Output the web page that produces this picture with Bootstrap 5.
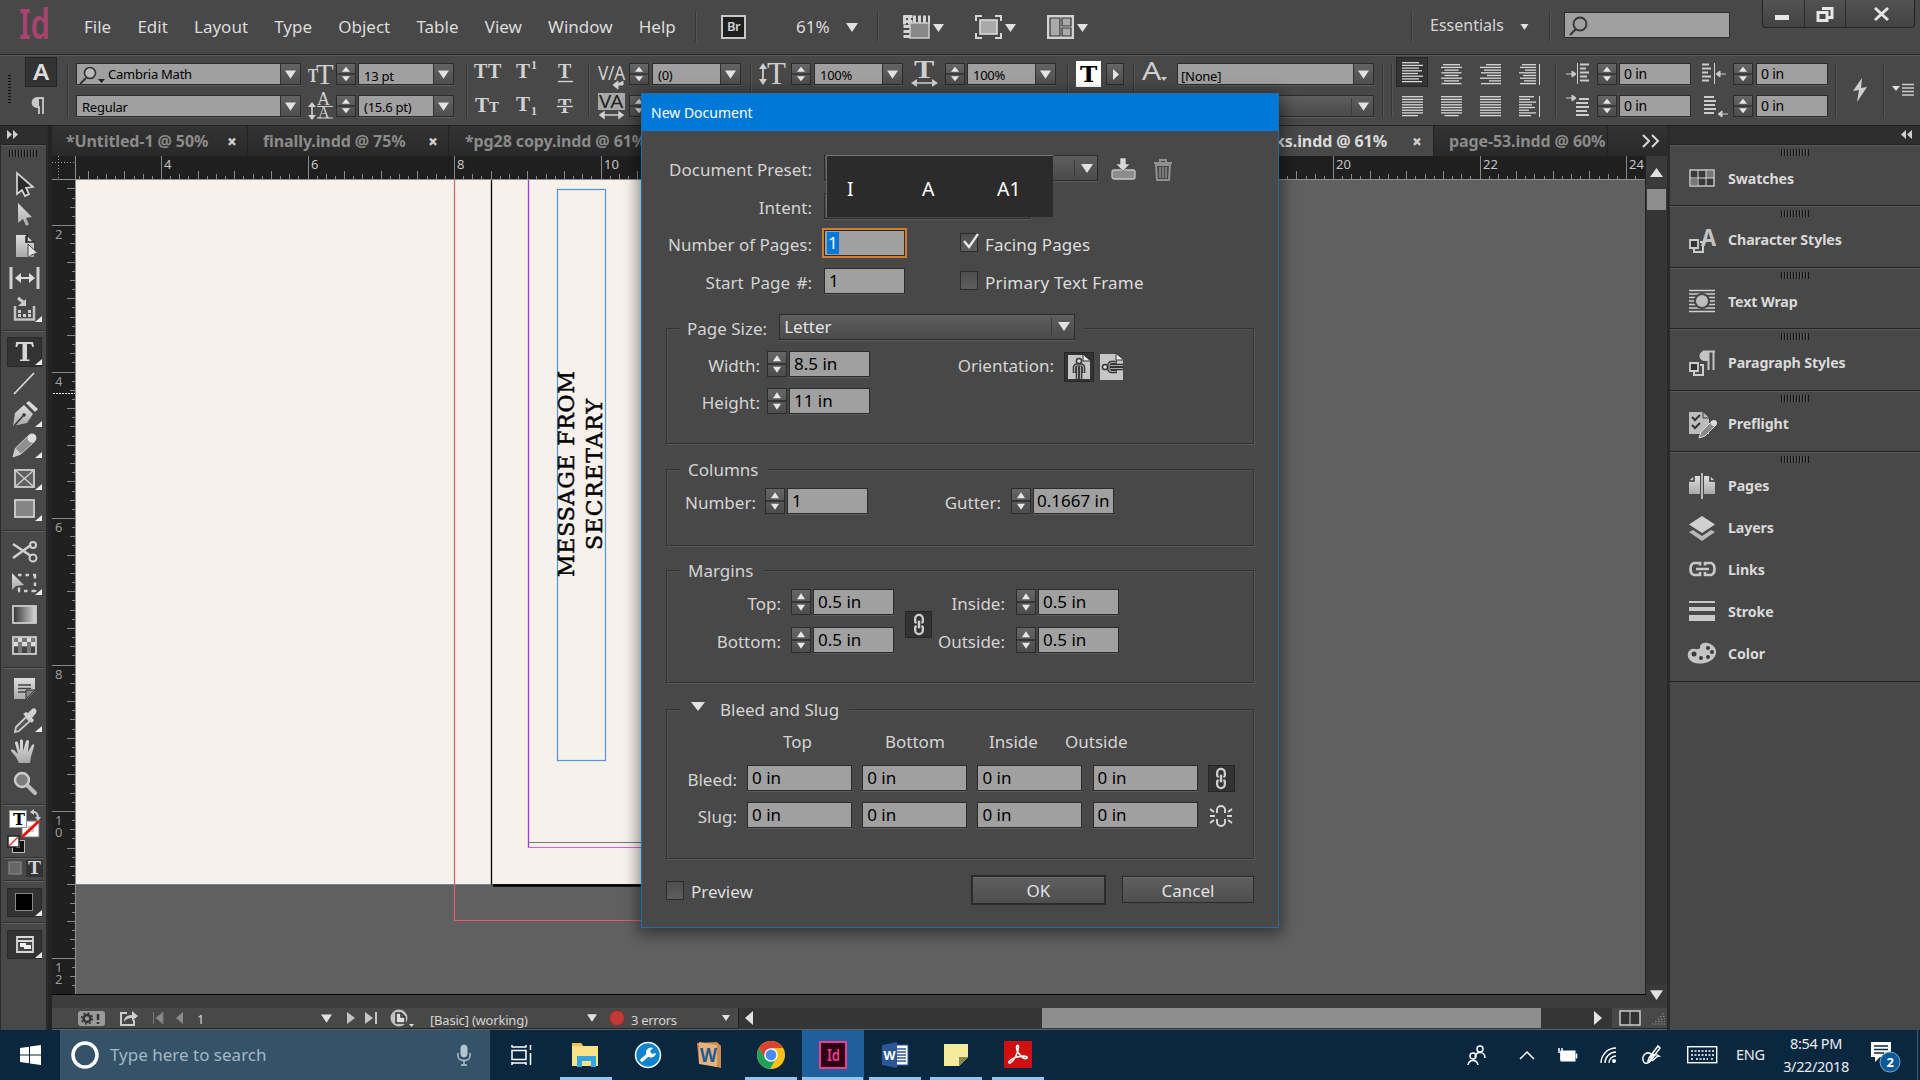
<!DOCTYPE html>
<html lang="en">
<head>
<meta charset="utf-8">
<title>New Document</title>
<link href="https://cdn.jsdelivr.net/npm/bootstrap@5.3.0/dist/css/bootstrap.min.css" rel="stylesheet">
<script src="https://cdn.jsdelivr.net/npm/bootstrap@5.3.0/dist/js/bootstrap.bundle.min.js"></script>
<style>
:root{--bg:#484848;--line:#2b2b2b;--fld:#a0a0a0;--ink:#d4d4d4}
body{width:1920px;height:1080px;overflow:hidden;background:var(--bg);color:var(--ink);font-family:"Noto Sans","Open Sans",sans-serif;font-size:17px;line-height:1.2;white-space:nowrap}
svg{display:block;flex:none;overflow:visible}
.shell{width:1920px;height:1080px}
/* menu bar */
.menus{height:54px;position:relative}
.menus .m-list{margin-left:33px;gap:26.2px;padding-top:1px;width:592px;font-size:17px;color:#dcdcdc}
.vsep{width:2px;background:#363636;border-right:1px solid #565656;flex:none}
.menus .vsep{height:30px}
.br-box{width:25px;height:24px;border:2px solid #c9c9c9;background:#1f1f1f;color:#d0d0d0;font-size:13px;line-height:19px;text-align:center;font-weight:600;letter-spacing:-.5px}
.find-box{width:166px;height:26px;background:var(--fld);border:1px solid var(--line)}
.win-ctl{position:absolute;right:5px;top:0;width:153px;height:28px;border:1px solid #232323;border-top:0;border-radius:0 0 4px 4px;background:linear-gradient(#525252,#434343)}
.win-ctl>span{border-right:1px solid #2b2b2b;height:27px}
.win-ctl>span:last-child{border:0}
/* control strip */
.ctl{height:72px;border-top:1px solid #262626;box-shadow:inset 0 1px #5a5a5a;border-bottom:1px solid #222;padding-top:8px;display:grid;grid-template-rows:22px 22px;row-gap:10px;grid-auto-flow:column;justify-items:start;align-items:center;align-content:start;font-size:13px;letter-spacing:-.25px;
grid-template-columns:25px 42px 9px 232px 28px 22px 108px 8px 42px 41px 31px 10px 31px 23px 98px 9px 32px 23px 97px 34px 22px 100px 9px 30px 27px 9px 35px 205px 9px 5px 41px 39px 39px 40px 11px 31px 22px 83px 31px 23px 79px 13px 35px 9px 28px}
.ctl .both{grid-row:span 2}
.ctl .vsep{height:54px;grid-row:span 2}
.box-in{background:var(--fld);border:1px solid var(--line);box-shadow:0 1px #5c5c5c;color:#000;display:flex;height:22px;line-height:22px;overflow:hidden;padding-left:5px;flex:none}
.box-in .drop{margin-left:auto;width:20px;background:linear-gradient(#636363,#4e4e4e);border-left:1px solid #333;display:flex;align-items:center;justify-content:center;flex:none}
.dim{background:linear-gradient(#5e5e5e,#4a4a4a);color:#e4e4e4}
.dim .drop{border:0;position:relative;background:none}
.dim .drop::before{content:"";width:1px;height:17px;background:#3a3a3a;margin-right:6px;margin-left:-7px}
.w225{width:225px}.w95{width:96px}.w88{width:89px}.w196{width:197px}.w72{width:72px}
.stp{width:20px;height:22px;border:1px solid var(--line);background:linear-gradient(#666,#4c4c4c);flex:none}
.stp svg{width:100%;height:100%}
.pressed{background:#333;border:1px solid #262626}
.ibtn{width:32px;height:30px;margin-top:-4px;display:flex;align-items:center;justify-content:center}
/* work area */
.work{height:904px}
.tools{width:48px;background:var(--bg);border-left:1px solid #2b2b2b;border-right:2px solid #2a2a2a;flex:none}
.dark-head{height:19px;background:#2e2e2e;border-bottom:1px solid #222}
.tools .grip-row{height:23px;padding:4px 0 0 8px;border-top:1px solid #5b5b5b}
.grip{width:28px;height:7px;background:repeating-linear-gradient(90deg,#141414 0 1px,#5a5a5a 1px 2px,#484848 2px 3px)}
.tool{height:31.45px;padding-top:.5px}
.tool svg{width:45px;height:30px}
.tool-sep{height:11.4px;padding:5px 2px 0 3px}
.tool-sep::before{content:"";display:block;height:2px;border-top:1px solid #303030;border-bottom:1px solid #626262}
.center{width:1619px;flex:none;border-left:4px solid #242424;position:relative;background:#606060}
.tabs{height:30px;background:linear-gradient(#333,#292929);font-size:16px;font-weight:700;color:#8b8b8b;letter-spacing:-.1px}
.tab{height:30px;border-right:1px solid #222;line-height:31px;display:flex}
.tab b{margin-left:auto;color:#cfcfcf;font-size:17px;width:9px}
.t1{width:196px;padding:0 11px 0 14px}.t2{width:201px;padding:0 11px 0 15px}.t3{width:202px;padding-left:16px;overflow:hidden}
.t4{width:783px;padding:0 12px 0 624px;background:var(--bg);color:#dcdcdc}.t5{width:174px;padding-left:15px;overflow:hidden}
.stage{height:838px}
.vbar{width:23px;background:#353535;border-left:1px solid #222}
.vbar .thumb{height:21px;background:#8e8e8e;margin:1px 1px 0}
.vbar .ar{height:32px;display:flex;justify-content:center;align-items:center;background:#3a3a3a}
.foot{height:21px;background:var(--bg);font-size:13px;letter-spacing:-.3px;border-bottom:1px solid #252525}
.foot>*{flex:none}
.pad-strip{height:14px;background:#3c3c3c;border-top:1px solid #000}
.side{flex:1;background:var(--bg);border-left:3px solid #2a2a2a}
.pane{border-top:1px solid #5b5b5b;border-bottom:1px solid #222;height:61.4px;padding-top:2px}
.pane .grip{margin:1px 0 0 111px}
.pane.tall{height:230px}
.entry{height:41.8px;display:flex;align-items:center;padding-left:18px;font-weight:700;font-size:14.2px;color:#dadada;letter-spacing:-.1px}
.entry svg{width:28px;height:26px;margin-right:12px}
.pane .entry{margin-top:1.5px}.pane.tall .entry{margin-top:0}.pane.tall .grip{margin-bottom:2px}
/* dialog */
.dlg{position:absolute;left:641px;top:93px;width:638px;height:835px;border:1px solid #1c6fa8;background:var(--bg);box-shadow:0 3px 14px 3px rgba(0,0,0,.45)}
.dlg-head{height:37px;background:#0078d7;color:#fff;font-size:14px;line-height:37px;padding-left:9px}
.dlg-body{padding:24px 24px 0}
.dlg .box-in{height:26px;line-height:24px;font-size:17px;padding-left:4px;width:81px;letter-spacing:0}
.dlg .stp{width:20px;height:26px;margin-right:2px}
.ln{display:flex;height:26px;margin-bottom:11.5px}
.lb{text-align:right;line-height:30px;flex:none}
.cbx{width:18px;height:19px;border:1px solid var(--line);background:linear-gradient(#4e4e4e,#5d5d5d);margin:3px 7px 0 0;flex:none}
.top-lb{width:146px;margin-right:12px}
.dlg .w273{width:274px}.dlg .w205{width:206px}.dlg .w296{width:296px}.dlg .w105{width:105px}
.focused{outline:2px solid #cf7f2b;outline-offset:0}
.sel-txt{background:#0078d7;color:#fff;height:22px;line-height:22px;margin-top:1px;padding:0 1px;margin-left:-2px}
.second{margin-left:auto;width:294px;display:flex;line-height:30px;color:#dedede;letter-spacing:.08px}
.grp{border:1px solid #333;box-shadow:1px 1px #585858,inset 1px 1px #525252;width:588px}
.grp-t{width:max-content;background:var(--bg);height:26px;margin:-15px 0 0 14px;padding:0 10px 0 7px;display:flex;line-height:29px}
.g1{height:116px;margin-top:34px}.g2{height:77px;margin-top:25px}.g3{height:113px;margin-top:24px}.g4{height:150px;margin-top:26px}
.g1 .lb{width:93px;margin-right:7px}.g2 .lb.a{width:89px;margin-right:9px}.g2 .lb.b{width:133px;margin-right:10px}
.g3 .lb.a{width:114px;margin-right:10px}.g3 .lb.b{width:111px;margin-right:11px}
.g4 .lb{width:70px;margin-right:10px}.g4 .box-in{margin-right:10.2px}
.g1 .ln:nth-child(2){margin-top:11px}
.g2 .ln,.g3 .ln:nth-child(2){margin-top:7.5px}
.heads{display:grid;grid-template-columns:102px 104px 76px 80px;margin:6px 0 0 116px;height:28px;line-height:30px}
.link-b{width:27px;height:27px;display:flex;align-items:center;justify-content:center}
.btn-x{background:linear-gradient(#5f5f5f,#4e4e4e);border:1px solid var(--line);box-shadow:inset 0 1px #6c6c6c;color:#e2e2e2;text-align:center}
.ok{width:135px;height:30px;border-width:2px;line-height:28px}
.cancel{width:132px;height:27px;line-height:27px;margin:1px 0 0 16px}
.ime{position:absolute;left:184px;top:61px;width:227px;height:62px;background:#2b2b2b;border-top:1px solid #777;border-left:1px solid #666;color:#fff;font-size:19.5px;line-height:65px;padding-left:20px;display:grid;grid-template-columns:75px 75px 50px}
/* taskbar */
.bar{height:50px;background:#0a2740;flex:none;color:#e9eef2}
.ask{width:430px;background:#345268;color:#a5b7c4}
.app{width:61.75px;height:50px;display:flex;flex-direction:column;align-items:center;padding-top:9px}
.app svg{width:32px;height:32px}
.app i{height:3px;width:52px;background:#93c6ef;margin-top:6px}
.app.on{background:#1e609c}.app.on i{width:61px}
</style>
</head>
<body>
<svg width="0" height="0" class="position-absolute">
<defs>
<linearGradient id="mt" x2="0" y2="1"><stop stop-color="#dedede"/><stop offset="1" stop-color="#a9a9a9"/></linearGradient>
<symbol id="dn" viewBox="0 0 12 9"><path d="M0 0h12L6 9z" fill="#e2e2e2"/></symbol>
<symbol id="ud" viewBox="0 0 20 22" preserveAspectRatio="none"><path d="M0 11h20" stroke="#2b2b2b" stroke-width="1.4"/><path d="M5.500 8.500h9L10 3zM5.500 13.500h9L10 19z" fill="#e6e6e6"/></symbol>
<symbol id="lk" viewBox="0 0 14 24"><path d="M3 10V6a4 4 0 0 1 8 0v4M3 14v4a4 4 0 0 0 8 0v-4M3 9.500l1.500 1M11 9.500l-1.500 1M3 14.500l1.500-1M11 14.500l-1.500-1" fill="none" stroke="#cfcfcf" stroke-width="2.400"/><path d="M7 8v8" stroke="#cfcfcf" stroke-width="2.600"/></symbol>
<symbol id="cn" viewBox="0 0 7 7"><path d="M7 0v6H0z" fill="#ececec"/></symbol>
<g id="man" fill="none"><path d="M9.500 20v-5q0-3 3-3h3q3 0 3 3v5M12.500 13v13M15.500 13v13" stroke="#333" stroke-width="3.600"/><path d="M9.500 19.500V15q0-3 3-3h3q3 0 3 3v4.500M12.500 13v13M15.500 13v13" stroke="#a8a8a8" stroke-width="1.200"/><circle cx="14" cy="8" r="2.600" fill="#ddd" stroke="#333" stroke-width="1.500"/></g>
</defs></svg>
<div class="shell d-flex flex-column">

<div class="menus d-flex align-items-center">
 <svg width="32" height="54" style="margin-left:19px"><text x="0" y="39" font-size="42" font-weight="600" fill="#a8436f" textLength="31" lengthAdjust="spacingAndGlyphs">Id</text></svg>
 <div class="m-list d-flex"><span>File</span><span>Edit</span><span>Layout</span><span>Type</span><span>Object</span><span>Table</span><span>View</span><span>Window</span><span>Help</span></div>
 <span class="vsep" style="margin-left:19px"></span>
 <span class="br-box" style="margin:0 50px 0 24px">Br</span>
 <span style="width:50px;color:#dcdcdc">61%</span>
 <svg width="12" height="9"><use href="#dn"/></svg>
 <span class="vsep" style="margin:0 24px 0 19px"></span>
 <svg width="41" height="24" style="margin-right:31px"><path d="M0 5h27M5 0v24" stroke="#d5d5d5" stroke-width="9" stroke-dasharray="3 2"/><rect x="7" y="8" width="19" height="15" fill="#888" stroke="#ccc" stroke-width="1.500"/><path d="M30 9h11l-5.500 8z" fill="#e2e2e2"/></svg>
 <svg width="41" height="24" style="margin-right:31px"><path d="M1 6V1h6M20 1h6v5M26 18v5h-6M7 23H1v-5" fill="none" stroke="#d5d5d5" stroke-width="2"/><rect x="5" y="5" width="17" height="14" fill="#a8a8a8" stroke="#e0e0e0" stroke-width="1.500"/><path d="M30 9h11l-5.500 8z" fill="#e2e2e2"/></svg>
 <svg width="41" height="24"><rect width="27" height="24" fill="#d2d2d2"/><path d="M3 3h10v18H3zM15 3h9v8h-9zM15 13h9v8h-9z" fill="#aaa" stroke="#333" stroke-width="1.200"/><path d="M30 9h11l-5.500 8z" fill="#e2e2e2"/></svg>
 <span class="vsep" style="margin-left:323px"></span>
 <span style="margin-left:17px;width:90px;font-size:16px;padding-bottom:2px">Essentials</span>
 <svg width="9" height="6"><use href="#dn"/></svg>
 <span class="vsep" style="margin:0 13px 0 20px"></span>
 <div class="find-box mb-1"><svg width="30" height="24"><circle cx="15" cy="11" r="6.500" fill="none" stroke="#333" stroke-width="1.800"/><path d="M11 16l-6 6" stroke="#333" stroke-width="2"/></svg></div>
 <div class="win-ctl d-flex"><span style="width:42px"><svg width="42" height="27"><rect x="12" y="15" width="14" height="5" fill="#e6e6e6"/></svg></span><span style="width:41px"><svg width="41" height="27"><path d="M17 8.500h10v9h-5M13 12.500h9v8h-9z" fill="none" stroke="#e6e6e6" stroke-width="3"/></svg></span><span><svg width="70" height="27"><path d="M29 8l13 12M42 8L29 20" stroke="#e6e6e6" stroke-width="3"/></svg></span></div>
</div>

<div class="ctl">
 <svg class="both" width="20" height="54"><path d="M9.500 12v30" stroke="#111" stroke-width="3" stroke-dasharray="1 2"/></svg>
 <div class="ibtn pressed"><svg width="20" height="20"><text x="2" y="18" font-size="22" font-weight="600" textLength="16" lengthAdjust="spacingAndGlyphs" fill="#dcdcdc">A</text></svg></div>
 <svg width="30" height="20"><path d="M19 2h-7a4.500 4.500 0 0 0 0 9h2v7M18 3v15" fill="none" stroke="#c8c8c8" stroke-width="1.800"/><path d="M14 2h-2a4.500 4.500 0 0 0 0 9h2z" fill="#c8c8c8"/></svg>
 <span class="vsep"></span>
 <div class="box-in w225 ps-0"><svg width="31" height="20"><circle cx="13" cy="9" r="5.500" fill="#b9b9b9" stroke="#333" stroke-width="1.600"/><path d="M9 14l-6 6" stroke="#333" stroke-width="2"/><path d="M21 15h7l-3.500 4z" fill="#222"/></svg><span style="line-height:20px">Cambria Math</span><span class="drop"><svg width="11" height="9"><use href="#dn"/></svg></span></div>
 <div class="box-in w225"><span style="line-height:23px">Regular</span><span class="drop"><svg width="11" height="9"><use href="#dn"/></svg></span></div>
 <svg width="26" height="22" fill="#cfcfcf" font-family="Liberation Serif"><text y="19" font-size="18" font-weight="700" textLength="10" lengthAdjust="spacingAndGlyphs">T</text><text x="8" y="21" font-size="29">T</text></svg>
 <svg width="26" height="24" fill="#cfcfcf" font-family="Liberation Serif"><text x="9" y="11" font-size="18">A</text><path d="M9 12.500h16M9 24h16" stroke="#cfcfcf"/><text x="10" y="24" font-size="16">A</text><path d="M4 11v12" stroke="#cfcfcf" stroke-width="1.600"/><path d="M0 13l4-5 4 5zM0 21l4 5 4-5z"/></svg>
 <div class="stp"><svg><use href="#ud"/></svg></div><div class="stp"><svg><use href="#ud"/></svg></div>
 <div class="box-in w95"><span style="line-height:24px">13 pt</span><span class="drop"><svg width="11" height="9"><use href="#dn"/></svg></span></div>
 <div class="box-in w95">(15.6 pt)<span class="drop"><svg width="11" height="9"><use href="#dn"/></svg></span></div>
 <span class="vsep"></span>
 <svg width="27" height="22" fill="#d2d2d2" font-family="Liberation Serif" font-weight="700"><text y="15" font-size="20" textLength="27">TT</text></svg>
 <svg width="27" height="22" fill="#d2d2d2" font-family="Liberation Serif" font-weight="700"><text y="17" x="1" font-size="21">T</text><text x="15" y="17" font-size="15">T</text></svg>
 <svg width="24" height="22" fill="#d2d2d2" font-family="Liberation Serif" font-weight="700"><text y="15" font-size="21">T</text><text x="15" y="6" font-size="12">1</text></svg>
 <svg width="24" height="22" fill="#d2d2d2" font-family="Liberation Serif" font-weight="700"><text y="16" font-size="21">T</text><text x="15" y="20" font-size="12">1</text></svg>
 <svg width="20" height="22" fill="#d2d2d2" font-family="Liberation Serif" font-weight="700"><text y="15" x="1" font-size="20">T</text><path d="M1 18.500h15" stroke="#d2d2d2" stroke-width="1.400"/></svg>
 <svg width="20" height="22" fill="#d2d2d2" font-family="Liberation Serif" font-weight="700"><text y="18" x="1" font-size="20">T</text><path d="M0 11.500h16" stroke="#484848" stroke-width="3"/><path d="M0 11.500h16" stroke="#d2d2d2" stroke-width="1.400"/></svg>
 <span class="vsep"></span>
 <svg width="27" height="22" fill="#cfcfcf"><text y="17" font-size="20" textLength="27" lengthAdjust="spacingAndGlyphs">V/A</text><path d="M16 22h9v-4M20 18l-5 4 5 4z" stroke="#cfcfcf" fill="#cfcfcf"/></svg>
 <svg width="27" height="26"><path d="M0 0h27v17H0z" fill="#a8a8a8"/><text x="1" y="15" font-size="18" textLength="24" lengthAdjust="spacingAndGlyphs" fill="#222">VA</text><path d="M3 22h21M6 19l-4 3 4 3zM21 19l4 3-4 3z" stroke="#d0d0d0" fill="#d0d0d0" stroke-width="1.500"/></svg>
 <div class="stp"><svg><use href="#ud"/></svg></div><div class="stp"><svg><use href="#ud"/></svg></div>
 <div class="box-in w88">(0)<span class="drop"><svg width="11" height="9"><use href="#dn"/></svg></span></div><i></i>
 <span class="vsep"></span>
 <svg width="28" height="22" fill="#cfcfcf" font-family="Liberation Serif"><text x="8" y="21" font-size="31">T</text><path d="M4 4v14" stroke="#cfcfcf" stroke-width="1.800"/><path d="M0 6l4-6 4 6zM0 16l4 6 4-6z"/></svg><i></i>
 <div class="stp"><svg><use href="#ud"/></svg></div><i></i>
 <div class="box-in w88">100%<span class="drop"><svg width="11" height="9"><use href="#dn"/></svg></span></div><i></i>
 <svg width="28" height="26" fill="#cfcfcf" font-family="Liberation Serif" font-weight="700"><text x="3" y="17" font-size="25" textLength="20" lengthAdjust="spacingAndGlyphs">T</text><path d="M3 22h21" stroke="#cfcfcf" stroke-width="1.600"/><path d="M6 18l-6 4 6 4zM21 18l6 4-6 4z"/></svg><i></i>
 <div class="stp"><svg><use href="#ud"/></svg></div><i></i>
 <div class="box-in w88">100%<span class="drop"><svg width="11" height="9"><use href="#dn"/></svg></span></div><i></i>
 <span class="vsep"></span>
 <svg width="25" height="26"><path d="M0 0h25v26H0z" fill="#fff"/><text x="4" y="21" font-size="23" font-weight="700" font-family="DejaVu Serif" textLength="17" lengthAdjust="spacingAndGlyphs">T</text></svg><i></i>
 <div class="stp" style="width:18px"><svg><path d="M6 5v11l6-5.500z" fill="#e6e6e6"/></svg></div><i></i>
 <span class="vsep"></span>
 <svg width="28" height="22" fill="#cfcfcf"><text y="17" font-size="25" textLength="19" lengthAdjust="spacingAndGlyphs">A</text><path d="M19 14h6l-3 4z"/></svg><i></i>
 <div class="box-in w196" style="padding-left:3px"><span style="line-height:24px">[None]</span><span class="drop"><svg width="11" height="9"><use href="#dn"/></svg></span></div>
 <div class="box-in dim w196"><span class="drop"><svg width="11" height="9"><use href="#dn"/></svg></span></div>
 <span class="vsep"></span><span class="vsep"></span>
 <div class="ibtn pressed"><svg class="al" data-w="17,21,17,20,16,21,17,20" data-a="l" width="21" height="20"></svg></div>
 <svg class="al" data-w="21,21,21,21,21,21,21,16" data-a="l" width="21" height="20" style="margin-left:6px"></svg>
 <svg class="al ms-1" data-w="17,21,14,20,14,21,15,20" data-a="c" width="21" height="20"></svg>
 <svg class="al ms-1" data-w="21,21,21,21,21,21,21,14" data-a="c" width="21" height="20"></svg>
 <svg class="al ms-1" data-w="15,21,17,20,14,21,12,20" data-a="r" width="21" height="20"></svg>
 <svg class="al ms-1" data-w="21,21,21,21,21,21,21,21" data-a="l" width="21" height="20"></svg>
 <svg class="al ms-1" data-w="14,16,11,17,13,16,12,16" data-a="r" data-bar="20" width="21" height="20"></svg>
 <svg class="al ms-1" data-w="15,11,17,13,16,10,17,12" data-a="l" data-bar="20" width="21" height="20"></svg>
 <span class="vsep"></span>
 <svg width="25" height="22"><path d="M0 11h6M6 8l4 3-4 3z" stroke="#ccc" fill="#ccc"/><path d="M11.500 0v21" stroke="#ccc"/><path d="M14 1.500h9M14 5.500h6M14 9.500h9M14 13.500h7M14 17.500h9" stroke="#ccc" stroke-width="2"/></svg>
 <svg width="25" height="22"><path d="M0 3h6M6 0l4 3-4 3z" stroke="#ccc" fill="#ccc"/><path d="M13 4h10M10 8h12M10 12h13M10 16h11M10 20h13" stroke="#ccc" stroke-width="1.800"/></svg>
 <div class="stp"><svg><use href="#ud"/></svg></div><div class="stp"><svg><use href="#ud"/></svg></div>
 <div class="box-in w72 ps-1" style="line-height:19px;font-size:14px">0 in</div><div class="box-in w72 ps-1" style="line-height:19px;font-size:14px">0 in</div>
 <svg width="25" height="22"><path d="M24 11h-6M18 8l-4 3 4 3z" stroke="#ccc" fill="#ccc"/><path d="M12.500 0v21" stroke="#ccc"/><path d="M0 1.500h7M0 5.500h9M0 9.500h6M0 13.500h9M0 17.500h7" stroke="#ccc" stroke-width="2"/></svg>
 <svg width="25" height="22"><path d="M26 19h-6M20 16l-4 3 4 3z" stroke="#ccc" fill="#ccc"/><path d="M2 2h10M2 6h12M2 10h11M2 14h12M2 18h10" stroke="#ccc" stroke-width="1.800"/></svg>
 <div class="stp"><svg><use href="#ud"/></svg></div><div class="stp"><svg><use href="#ud"/></svg></div>
 <div class="box-in w72 ps-1" style="line-height:19px;font-size:14px">0 in</div><div class="box-in w72 ps-1" style="line-height:19px;font-size:14px">0 in</div>
 <span class="vsep"></span>
 <svg class="both" width="24" height="26"><path d="M14 1L5 14l6-1-2 12 10-15-6 1z" fill="#cfcfcf"/></svg>
 <span class="vsep"></span>
 <svg class="both" width="22" height="14"><path d="M0 3h8l-4 5z" fill="#ddd"/><path d="M10 1.500h12M10 5h12M10 8.500h12M10 12h12" stroke="#ccc" stroke-width="1.300"/></svg>
</div>

<div class="work d-flex">
 <div class="tools">
  <div class="dark-head"><svg width="20" height="18"><path d="M6 4v9l5-4.500zM12 4v9l5-4.500z" fill="#cfcfcf"/></svg></div>
  <div class="grip-row"><div class="grip"></div></div>
  <div class="tool"><svg><path d="M16 4v21l5-4 3 6 4-2-3-6 7-1z" fill="#2b2b2b" stroke="#d6d6d6" stroke-width="1.700"/></svg></div>
  <div class="tool"><svg><path d="M17 3v20l5-4 3 7 3-1.500-3-6.500 6-1z" fill="url(#mt)"/></svg></div>
  <div class="tool"><svg><path d="M15 4h10l8 8v14H15z" fill="url(#mt)"/><path d="M26 3v8h8M25 5v7" fill="none" stroke="#2b2b2b" stroke-width="1.500"/><path d="M27 13v14l3.500-3 6-2z" fill="#e2e2e2" stroke="#444"/></svg></div>
  <div class="tool"><svg><path d="M10 4v22M37 4v22" stroke="#cfcfcf" stroke-width="3"/><path d="M18 15h12" stroke="#ddd" stroke-width="2"/><path d="M14 15l6-5v10zM34 15l-6-5v10z" fill="#ddd"/></svg></div>
  <div class="tool"><svg><g transform="translate(0 3)"><path d="M17 1l5 4" stroke="#ccc" stroke-width="3"/><path d="M25 2v7h-8z" fill="#ccc"/><path d="M14 9v13.500h19V9" fill="none" stroke="#c4c4c4" stroke-width="2.500"/><path d="M17 13h3v3h-3zM27 13h3v3h-3zM17 17h3v3h-3zM22 17h3v3h-3zM27 17h3v3h-3z" fill="#ccc"/><use href="#cn" x="34" y="19" width="7" height="7"/></g></svg></div>
  <div class="tool-sep"></div>
  <div class="tool"><svg><rect x="6.500" y=".5" width="34" height="29" fill="#333" stroke="#292929"/><path d="M15 5h17l1 5h-1.500l-1.500-3h-4v15.500h2.500V24H19v-1.500h2.500V7h-4l-1.500 3h-1.500z" fill="#d6d6d6"/><use href="#cn" x="34" y="22" width="7" height="7"/></svg></div>
  <div class="tool"><svg><path d="M13 25L33 4" stroke="#d8d8d8" stroke-width="1.800"/></svg></div>
  <div class="tool"><svg><path d="M12 26l2-13 9-8 9 9-6 9z" fill="url(#mt)"/><path d="M13 26l9-10" stroke="#333" stroke-width="1.500"/><circle cx="23" cy="15" r="1.800" fill="#333"/><path d="M25 3l3-2 9 8-3 3z" fill="#dadada"/><use href="#cn" x="34" y="21" width="7" height="7"/></svg></div>
  <div class="tool"><svg><path d="M12 26l2.500-9L27 5l6 6-13 12z" fill="#8f8f8f" stroke="#ccc"/><path d="M12 26l2.500-9 5.500 6z" fill="#ccc"/><circle cx="31" cy="7" r="4.500" fill="#ddd"/><use href="#cn" x="34" y="21" width="7" height="7"/></svg></div>
  <div class="tool"><svg><rect x="14" y="7" width="19" height="17" fill="#606060" stroke="#cfcfcf" stroke-width="1.800"/><path d="M14 7l19 17M33 7L14 24" stroke="#cfcfcf" stroke-width="1.300"/><use href="#cn" x="34" y="21" width="7" height="7"/></svg></div>
  <div class="tool"><svg><rect x="14" y="6" width="19" height="17" fill="#858585" stroke="#cfcfcf" stroke-width="1.800"/><use href="#cn" x="34" y="21" width="7" height="7"/></svg></div>
  <div class="tool-sep"></div>
  <div class="tool"><svg><path d="M12 7l18 12M12 21L30 8" stroke="#cfcfcf" stroke-width="2.600"/><circle cx="32" cy="8" r="3" fill="none" stroke="#cfcfcf" stroke-width="2"/><circle cx="32" cy="21" r="3.500" fill="none" stroke="#cfcfcf" stroke-width="2"/></svg></div>
  <div class="tool"><svg><path d="M11 4v17l4-4 8-1z" fill="url(#mt)"/><path d="M17 6h18M34 6v17M34 22H17M18 22v-4" fill="none" stroke="#cfcfcf" stroke-width="2.500" stroke-dasharray="3.500 4"/><use href="#cn" x="34" y="20" width="7" height="7"/></svg></div>
  <div class="tool"><svg><defs><linearGradient id="gg"><stop stop-color="#333"/><stop offset="1" stop-color="#d8d8d8"/></linearGradient></defs><rect x="12" y="6" width="23" height="17" fill="url(#gg)" stroke="#ccc" stroke-width="1.800"/></svg></div>
  <div class="tool"><svg><rect x="12" y="6" width="23" height="17" fill="#777" stroke="#ccc" stroke-width="1.800"/><path d="M17 7h4v4h-4zM26 7h4v4h-4zM13 11h4v4h-4zM21 11h5v4h-5zM30 11h4v4h-4z" fill="#ddd"/><path d="M13 16h4v6h-4zM21 16h5v6h-5zM30 16h4v6h-4z" fill="#444"/></svg></div>
  <div class="tool-sep"></div>
  <div class="tool"><svg><path d="M13 4h21v13l-8 8H13z" fill="url(#mt)"/><path d="M17 11h13M17 14.500h13M17 18h8" stroke="#444" stroke-width="1.300"/><path d="M34 16h-9v9z" fill="#888" stroke="#333"/></svg></div>
  <div class="tool"><svg><path d="M14 26l1-5L25 11l4 4-11 10z" fill="#555" stroke="#ccc" stroke-width="1.800"/><path d="M22 8l9 9 2-3-2-2 4-5c2-3-2-6-4-4l-4 4-2-1z" fill="#d2d2d2"/><use href="#cn" x="34" y="20" width="7" height="7"/></svg></div>
  <div class="tool"><svg><path d="M18 26l-3-6-5-6c0-2 2-2 4 0l3 3-3-11c0-2 2.500-2 3 0l2 8V4c0-2 3-2 3 0v10l3-10c1-2 3-1 3 .500L27 15l4-7c1-1.500 3-.5 2 1.500l-3 10-1 6.500z" fill="url(#mt)"/></svg></div>
  <div class="tool"><svg><circle cx="21" cy="11" r="7" fill="#7d7d7d" stroke="#ccc" stroke-width="2.400"/><path d="M26 16l8 8" stroke="#bdbdbd" stroke-width="4" stroke-linecap="round"/></svg></div>
  <div class="tool-sep" style="height:9.4px"></div>
  <svg width="45" height="150"><rect x="8.500" y="1.500" width="17" height="17" fill="#fff" stroke="#ddd"/><text x="12" y="16" font-family="DejaVu Serif" font-weight="700" font-size="16" textLength="12" lengthAdjust="spacingAndGlyphs">T</text><rect x="21" y="12" width="17" height="16" fill="#fff" stroke="#777"/><rect x="27" y="17" width="6" height="6" fill="#ccc"/><path d="M21 28L38 12" stroke="#e8100c" stroke-width="3"/><rect x="8.500" y="1.500" width="17" height="17" fill="#fff" stroke="#999"/><text x="12" y="16" font-family="DejaVu Serif" font-weight="700" font-size="16" textLength="12" lengthAdjust="spacingAndGlyphs">T</text><path d="M30 3c5-1 7 2 7 6" fill="none" stroke="#ccc" stroke-width="2"/><path d="M33 0l-4 3 4 3zM34 8h6l-3 4z" fill="#ccc"/><rect x="11.500" y="31.500" width="12" height="12" fill="#111" stroke="#bbb"/><rect x="15" y="34" width="4" height="5" fill="#ddd"/><rect x="7" y="27" width="11" height="11" fill="#fff" stroke="#222" stroke-width="1.500"/><path d="M8 37l9-9" stroke="#d33" stroke-width="1.500"/>
  <path d="M3 49.500h40M3 72.500h40M3 114.500h40" stroke="#626262"/><path d="M3 48.500h40M3 71.500h40M3 113.500h40" stroke="#303030"/><rect x="8" y="53" width="12" height="12" fill="#666" stroke="#8b8b8b"/><rect x="25" y="51" width="17" height="17" fill="#333"/><text x="27" y="65" font-family="Liberation Serif" font-weight="700" font-size="18" fill="#d8d8d8" textLength="13" lengthAdjust="spacingAndGlyphs">T</text>
  <rect x="6.500" y="79.500" width="34" height="28" fill="#333" stroke="#292929"/><rect x="14.500" y="84.500" width="17" height="17" stroke="#888"/><use href="#cn" x="34" y="101" width="7" height="7"/>
  <rect x="6.500" y="121.500" width="34" height="28" fill="#333" stroke="#292929"/><path d="M16 128h16v15H16zM16 132h16" fill="#444" stroke="#d8d8d8" stroke-width="1.800"/><path d="M19 134h6v4h-6zM23 136h7v4h-7z" fill="#eee"/><use href="#cn" x="34" y="143" width="7" height="7"/></svg>
 </div>

 <div class="center">
  <div class="tabs d-flex">
   <div class="tab t1">*Untitled-1 @ 50%<b>×</b></div><div class="tab t2">finally.indd @ 75%<b>×</b></div><div class="tab t3">*pg28 copy.indd @ 61%</div><div class="tab t4">ks.indd @ 61%<b>×</b></div><div class="tab t5">page-53.indd @ 60%</div>
   <svg width="50" height="30"><path d="M35 9l6 6-6 6M44 9l6 6-6 6" fill="none" stroke="#d8d8d8" stroke-width="2"/></svg>
  </div>
  <div class="stage d-flex">
   <svg id="stage" width="1593" height="838" viewBox="52 156 1593 838">
    <rect x="52" y="156" width="1593" height="838" fill="#606060"/>
    <rect x="76" y="180" width="566" height="704" fill="#f6f1eb"/>
    <path d="M76 884.500h415" stroke="#70879b"/>
    <path d="M454.500 180v740.500h200" fill="none" stroke="#dc5f6c" stroke-width="1.200"/>
    <path d="M491.500 180v704.500" stroke="#000" stroke-width="1.300"/><path d="M493 885.500h153" stroke="#000" stroke-width="2.500"/>
    <path d="M528.500 180v668" stroke="#9b3fc9" stroke-width="1.300"/><path d="M528 842.500h115" stroke="#777"/><path d="M528 847.500h115" stroke="#e15be0" stroke-width="1.200"/>
    <rect x="557.500" y="189.500" width="48" height="571" fill="none" stroke="#5595e0" stroke-width="1.200"/>
    <g font-family="DejaVu Serif" font-size="22" fill="#000" stroke="#000" stroke-width=".45"><text transform="translate(574 577) rotate(-90)" textLength="206">MESSAGE FROM</text><text transform="translate(602 550) rotate(-90)" textLength="151">SECRETARY</text></g>
    <rect x="52" y="156" width="1593" height="24" fill="#1f1f1f"/><rect x="52" y="156" width="24" height="838" fill="#1f1f1f"/>
    <path d="M52 179.500h1593M75.500 156v838" stroke="#8f8f8f"/>
    <path d="M52 162.500h23M58.500 156v23" stroke="#999" stroke-dasharray="1 2"/>
    <path d="M53 393.500h22" stroke="#eee" stroke-dasharray="2 1"/>
    <g id="ticks" stroke="#8a8a8a"></g><g id="nums" font-size="13" fill="#c4c4c4"></g>
   </svg>
   <div class="vbar d-flex flex-column"><div class="ar"><svg width="13" height="9"><path d="M0 9h13L6.500 0z" fill="#e2e2e2"/></svg></div><div class="thumb"></div><div class="ar mt-auto" style="height:20px;margin-bottom:-11px"><svg width="13" height="10"><use href="#dn"/></svg></div></div>
  </div>
  <div class="pad-strip"></div>
  <div class="foot d-flex align-items-center">
   <svg width="27" height="15" style="margin-left:26px"><rect width="27" height="15" rx="3" fill="#9a9a9a"/><circle cx="9" cy="7.500" r="3.500" fill="none" stroke="#333" stroke-width="2.500"/><circle cx="9" cy="7.500" r="5.500" fill="none" stroke="#333" stroke-width="1.500" stroke-dasharray="2 2.300"/><path d="M20 3v6M20 11v2" stroke="#333" stroke-width="2.500"/></svg>
   <svg width="20" height="15" style="margin-left:14px"><path d="M8 2H2v12h13V9" fill="none" stroke="#ccc" stroke-width="2"/><path d="M5 11c0-5 3-7 8-7V0l6 5-6 5V7c-4 0-6 1-8 4z" fill="#ccc"/></svg>
   <svg width="13" height="12" style="margin-left:13px"><path d="M1.500 0v12M11 0v12L4 6z" stroke="#777" fill="#8a8a8a"/></svg>
   <svg width="8" height="12" style="margin-left:11px"><path d="M7 0v12L0 6z" fill="#8a8a8a"/></svg>
   <span style="margin-left:13px;width:124px;padding-top:3px">1</span>
   <svg width="11" height="9"><use href="#dn"/></svg>
   <svg width="8" height="12" style="margin-left:15px"><path d="M0 0v12l8-6z" fill="#c4c4c4"/></svg>
   <svg width="13" height="12" style="margin-left:10px"><path d="M0 0v12l8-6z" fill="#c4c4c4"/><path d="M11 0v12" stroke="#c4c4c4" stroke-width="2"/></svg>
   <svg width="25" height="18" style="margin-left:12px"><circle cx="9" cy="9" r="8.500" fill="#c2c2c2"/><path d="M6 4h5l4 4v6H6zM11 4v4h4" fill="#ddd" stroke="#333" stroke-width="1.500"/><path d="M19 15h5l-2.500 3z" fill="#ddd"/></svg>
   <span style="margin-left:15px;width:157px;padding-top:5px;letter-spacing:-.2px">[Basic] (working)</span>
   <svg width="10" height="8"><use href="#dn"/></svg>
   <svg width="16" height="16" style="margin-left:12px"><circle cx="8" cy="8" r="7.500" fill="#c23a34" stroke="#8c2a26"/></svg>
   <span style="margin-left:6px;width:91px;padding-top:6px">3 errors</span>
   <svg width="8" height="6"><use href="#dn"/></svg>
   <div class="d-flex align-items-center" style="width:874px;height:21px;background:#353535;margin-left:8px;border-left:1px solid #222"><svg width="9" height="14" style="margin-left:6px"><path d="M8 0v14L0 7z" fill="#e2e2e2"/></svg><div style="width:499px;height:20px;background:#8e8e8e;margin-left:288px"></div><svg width="9" height="14" style="margin-left:53px"><path d="M0 0v14l8-7z" fill="#e2e2e2"/></svg></div>
   <svg width="22" height="16" style="margin-left:7px"><rect x="1" y="1" width="20" height="14" fill="#333" stroke="#ccc" stroke-width="1.500"/><path d="M11 1v14" stroke="#ccc"/></svg>
   <svg width="14" height="14" style="margin-left:10px"><path d="M1 13h13M4 10.500h10M7 8h7M9 5.500h5M11 3h3" stroke="#8e8e8e" stroke-dasharray="1.500 1.500"/></svg>
  </div>
 </div>

 <div class="side">
  <div class="dark-head"><svg width="249" height="18"><path d="M236 4v9l-5-4.500zM242 4v9l-5-4.500z" fill="#cfcfcf"/></svg></div>
  <div class="pane"><div class="grip"></div><div class="entry"><svg><rect x="2" y="5" width="24" height="16" fill="#3a3a3a" stroke="#d8d8d8" stroke-width="1.300"/><path d="M18 6h7v7h-7zM3 14h6v6H3z" fill="#777"/><path d="M10 5v16M18 5v16M2 13h24" stroke="#d8d8d8"/></svg>Swatches</div></div>
  <div class="pane"><div class="grip"></div><div class="entry"><svg><path d="M2 13h8v8H2z" fill="#333" stroke="#ccc" stroke-width="1.800"/><path d="M12 15h3v10H6v-3" fill="none" stroke="#ccc" stroke-width="2"/><text x="13" y="19" font-size="24" font-weight="700" fill="#c4c4c4" textLength="15" lengthAdjust="spacingAndGlyphs">A</text></svg>Character Styles</div></div>
  <div class="pane"><div class="grip"></div><div class="entry"><svg><path d="M1 2.500h26M1 6h26M1 9.500h26M1 13h26M1 16.500h26M1 20h26M1 23.500h26" stroke="#cfcfcf" stroke-width="1.700"/><circle cx="14" cy="13" r="7" fill="#bdbdbd" stroke="#444" stroke-width="2"/></svg>Text Wrap</div></div>
  <div class="pane"><div class="grip"></div><div class="entry"><svg><path d="M2 13h8v8H2z" fill="#333" stroke="#ccc" stroke-width="1.800"/><path d="M12 15h3v10H6v-3" fill="none" stroke="#ccc" stroke-width="2"/><path d="M25 1h-8a5 5 0 0 0-1 10h5V1" fill="#c4c4c4"/><path d="M20.500 1v19M25.500 1v19M15 1.500h12" stroke="#c4c4c4" stroke-width="2"/></svg>Paragraph Styles</div></div>
  <div class="pane"><div class="grip"></div><div class="entry"><svg><path d="M1 1h14l6 6v16H1z" fill="#bdbdbd"/><path d="M15 1v6h6" fill="none" stroke="#333"/><path d="M4 6l3 3 5-5M4 14l3 3 5-5" fill="none" stroke="#333" stroke-width="2"/><path d="M11 27l2-6L24 10l4 4-11 11z" fill="#8a8a8a" stroke="#ddd"/><circle cx="26" cy="12" r="3" fill="#ddd"/></svg>Preflight</div></div>
  <div class="pane tall"><div class="grip"></div>
   <div class="entry"><svg><path d="M1 8l5-5h6v18H1zM27 8l-5-5h-6v18h11z" fill="url(#mt)"/><path d="M14 0v26" stroke="#ddd" stroke-width="1.500"/><path d="M1 8h5V3M27 8h-5V3" fill="none" stroke="#333" stroke-width="1.500"/></svg>Pages</div>
   <div class="entry"><svg><path d="M14 1l13 8.500L14 18 1 9.500z" fill="#d0d0d0"/><path d="M5 15l-4 2 13 9 13-9-4-2-9 6z" fill="#b8b8b8"/></svg>Layers</div>
   <div class="entry"><svg><path d="M12 9.500V7H6Q2.500 8 2.500 13T6 19h6v-3M17 9.500V7h6q3.500 1 3.500 6T23 19h-6v-3" fill="none" stroke="#c8c8c8" stroke-width="2.700"/><path d="M8 13h13" stroke="#c8c8c8" stroke-width="2.500"/></svg>Links</div>
   <div class="entry"><svg><path d="M1 3h26v2H1zM1 9h26v4H1zM1 17h26v6H1z" fill="#c8c8c8"/></svg>Stroke</div>
   <div class="entry"><svg><path d="M12 6c1-2 3-4 8-3 7 2 10 8 7 13-3 6-12 9-20 7-6-2-8-6-7-10 1-3 4-5 7-4 4 1 6-1 5-3z" fill="#c4c4c4"/><g fill="#3a3a3a"><circle cx="6" cy="14" r="2.500"/><circle cx="13" cy="18" r="2"/><circle cx="20" cy="17" r="2"/><circle cx="24" cy="12" r="2"/><circle cx="20" cy="8" r="2"/></g></svg>Color</div>
  </div>
 </div>
</div>

<div class="bar d-flex align-items-center">
 <svg width="21" height="20" style="margin:0 19px 0 20px"><path d="M0 3l9-1.300V9.500H0zM10 1.500L21 0v9.500H10zM0 10.500h9v7.800L0 17zM10 10.500h11V20l-11-1.500z" fill="#fff"/></svg>
 <div class="ask d-flex align-items-center h-100"><svg width="28" height="28" style="margin:0 11px"><circle cx="14" cy="14" r="12" fill="none" stroke="#fff" stroke-width="3.500"/></svg><span style="width:347px;font-size:17px">Type here to search</span><svg width="14" height="22"><rect x="4" y="1" width="6" height="12" rx="3" fill="#b5c4ce" stroke="#b5c4ce"/><path d="M1 9v3c0 6 12 6 12 0V9M7 17v4M4 21h6" fill="none" stroke="#b5c4ce" stroke-width="1.400"/></svg></div>
 <svg width="22" height="20" style="margin:0 22px 0 21px"><path d="M1 5.500h14v9H1zM1 2.500V0M15 2.500V0M1 2h14M1 18h14M1 20v-3M15 20v-3M19.500 0v5M19.500 8v12" fill="none" stroke="#fff" stroke-width="1.500"/></svg>
 <div class="app"><svg><path d="M2 4h9l2 3h15v20H2z" fill="#fbe08a"/><path d="M2 4h9l2 3H2z" fill="#f0c14e"/><path d="M7 17h19v11h-5v-6h-9v6H7z" fill="#35a5df"/></svg><i></i></div>
 <div class="app"><svg><circle cx="16" cy="16" r="12.500" fill="#1184cf" stroke="#fff" stroke-width="1.500"/><path d="M10 21l7-6" stroke="#fff" stroke-width="3.500" stroke-linecap="round"/><path d="M21 9a5 5 0 1 0 3 5l-4 1-2-3z" fill="#fff"/></svg></div>
 <div class="app"><svg><path d="M4 4l20-1 4 4v22l-8-2L6 24z" fill="#d08c4d"/><path d="M6 3l18 3v22L6 25z" fill="#e7b27c"/><text x="7" y="23" font-size="19" font-weight="700" fill="#1c5c98" textLength="17" lengthAdjust="spacingAndGlyphs">W</text></svg></div>
 <div class="app"><svg><circle cx="16" cy="16" r="14" fill="#fbc116"/><path d="M3.900 9A14 14 0 0 1 28.100 9H16L10 19.500z" fill="#de4032"/><path d="M3.900 9A14 14 0 0 0 15 30l6-10.500H10z" fill="#1da05d"/><circle cx="16" cy="16" r="6.800" fill="#fff"/><circle cx="16" cy="16" r="5.400" fill="#4a8af4"/></svg><i></i></div>
 <div class="app on"><svg><rect x="3" y="3" width="26" height="26" fill="#2e0013" stroke="#ee3d8f" stroke-width="2"/><text x="10" y="22" font-size="16" font-weight="600" fill="#ee3d8f" textLength="13" lengthAdjust="spacingAndGlyphs">Id</text></svg><i></i></div>
 <div class="app"><svg><rect x="15" y="6" width="14" height="20" fill="#fff" stroke="#2b5797"/><path d="M18 10h9M18 13h9M18 16h9M18 19h9M18 22h9" stroke="#2b5797" stroke-width="1.500"/><path d="M3 6l15-3v26L3 26z" fill="#2b5797"/><text x="4.500" y="21" font-size="13" font-weight="700" fill="#fff" textLength="12" lengthAdjust="spacingAndGlyphs">W</text></svg><i></i></div>
 <div class="app"><svg><path d="M4 5h24v13l-9 9H4z" fill="#f3ea9b"/><path d="M28 18l-9 9v-9z" fill="#8d8751"/></svg><i></i></div>
 <div class="app"><svg><rect x="2" y="2" width="28" height="27" rx="1" fill="#cf0f10"/><path d="M8 24c-3 0 0-4 7-6 7-1.500 11-1 10 1-2 2-8-2-10-8-1.500-5 1.500-6 1.500-3 0 4-4 14-8.500 16z" fill="none" stroke="#fff" stroke-width="1.600"/></svg><i></i></div>
 <svg width="20" height="20" style="margin:0 32px 0 418px"><g fill="none" stroke="#fff" stroke-width="1.500"><circle cx="13" cy="4" r="3"/><path d="M8 12c1-6 10-6 10 1"/><circle cx="6" cy="11" r="3"/><path d="M1 20c1-6 9-6 10 0"/></g></svg>
 <svg width="16" height="9"><path d="M1 8l7-7 7 7" fill="none" stroke="#fff" stroke-width="1.500"/></svg>
 <svg width="21" height="14" style="margin-left:22px"><rect x="4" y="3" width="14" height="10" fill="#fff" stroke="#fff"/><path d="M19.500 5.500v5M2 0v3M5 0v3M1 4h6M4 5v7" stroke="#fff" stroke-width="1.500"/></svg>
 <svg width="18" height="18" style="margin-left:21px"><g fill="none" stroke="#fff" stroke-width="1.400"><path d="M2 17A15 15 0 0 1 17 2M6 17A11 11 0 0 1 17 6M10 17a7 7 0 0 1 7-7"/></g><circle cx="15" cy="15" r="2" fill="#fff"/></svg>
 <svg width="20" height="20" style="margin-left:25px"><path d="M7 13L16 1l2 2-9 12-3 1zM9 9c-4-3-9 1-8 6 1 6 8 3 8-2 0-3 4-5 8-2-3 0-4 3-7 5" fill="none" stroke="#fff" stroke-width="1.500"/></svg>
 <svg width="31" height="18" style="margin-left:25px"><rect x=".7" y=".7" width="29" height="16" fill="none" stroke="#fff" stroke-width="1.400"/><path d="M4 5h23M4 9h23M4 13h3M9 13h12M24 13h3" stroke="#fff" stroke-width="1.600" stroke-dasharray="2 1.500"/></svg>
 <span style="font-size:14.500px;width:44px;margin-left:18px;letter-spacing:-.3px">ENG</span>
 <div class="text-center" style="width:72px;font-size:14.500px;line-height:23px;letter-spacing:-.35px">8:54 PM<br>3/22/2018</div>
 <svg width="31" height="34" style="margin-left:19px"><path d="M0 4h20v15H9l-5 5v-5H0z" fill="#fff"/><path d="M3 8h14M3 11.500h14M3 15h10" stroke="#0a2740" stroke-width="1.300"/><circle cx="19" cy="24" r="10" fill="#0d5a96" stroke="#79a8cb"/><text x="15.500" y="29" font-size="13" font-weight="700" fill="#fff">2</text></svg>
 <span style="width:1px;height:50px;background:#46596b;margin-left:15px"></span>
</div>
</div>

<div class="dlg">
 <div class="dlg-head">New Document</div>
 <div class="dlg-body">
  <div class="ln"><span class="lb top-lb">Document Preset:</span><div class="box-in dim w273"><span class="drop"><svg width="12" height="9"><use href="#dn"/></svg></span></div>
   <svg width="25" height="24" style="margin:3px 18px 0 13px"><rect x="1" y="12" width="23" height="9" rx="2" fill="#8c8c8c" stroke="#c4c4c4" stroke-width="1.300"/><path d="M9 0h6v6h4l-7 7-7-7h4z" fill="#d8d8d8" stroke="#484848" stroke-width=".6"/></svg>
   <svg width="18" height="24" style="margin-top:3px"><path d="M2 7h14l-1 15H3zM0 5h18M6 4V2h6v2" fill="none" stroke="#909090" stroke-width="2"/><path d="M6 9v11M9 9v11M12 9v11" stroke="#909090" stroke-width="1.400"/></svg></div>
  <div class="ln"><span class="lb top-lb">Intent:</span><div class="box-in dim w205"><span class="drop"></span></div></div>
  <div class="ln"><span class="lb top-lb">Number of Pages:</span><div class="box-in focused"><span class="sel-txt">1</span></div><div class="second"><span class="cbx"><svg width="18" height="18"><path d="M3 7l5 6 9-13" fill="none" stroke="#e8e8e8" stroke-width="2.300"/></svg></span>Facing Pages</div></div>
  <div class="ln"><span class="lb top-lb" style="word-spacing:2px">Start Page #:</span><div class="box-in">1</div><div class="second" style="letter-spacing:.22px"><span class="cbx"></span>Primary Text Frame</div></div>
  <div class="grp g1">
   <div class="grp-t" style="padding-left:6px">Page Size:<div class="box-in dim w296" style="margin-left:12px">Letter<span class="drop"><svg width="12" height="9"><use href="#dn"/></svg></span></div></div>
   <div class="ln"><span class="lb">Width:</span><div class="stp"><svg><use href="#ud"/></svg></div><div class="box-in">8.5 in</div><span class="lb" style="width:184px;margin-right:10px">Orientation:</span>
    <div class="pressed" style="width:30px;height:30px;margin-top:1px"><svg width="28" height="28"><path d="M3 2h15l7 6v18H3z" fill="#c6c6c6"/><path d="M18 2v6h7" fill="#eee" stroke="#333"/><use href="#man"/></svg></div>
    <svg width="23" height="26" style="margin:3px 0 0 6px"><path d="M0 0h16l7 6v20H0z" fill="#c6c6c6"/><path d="M16 0v6h7" fill="#eee" stroke="#333"/><use href="#man" transform="translate(-3 27) rotate(-90)"/></svg></div>
   <div class="ln"><span class="lb">Height:</span><div class="stp"><svg><use href="#ud"/></svg></div><div class="box-in">11 in</div></div>
  </div>
  <div class="grp g2"><div class="grp-t">Columns</div>
   <div class="ln"><span class="lb a">Number:</span><div class="stp"><svg><use href="#ud"/></svg></div><div class="box-in">1</div><span class="lb b">Gutter:</span><div class="stp"><svg><use href="#ud"/></svg></div><div class="box-in" style="padding-left:3px">0.1667 in</div></div>
  </div>
  <div class="grp g3"><div class="grp-t">Margins</div>
   <div class="ln"><span class="lb a">Top:</span><div class="stp"><svg><use href="#ud"/></svg></div><div class="box-in">0.5 in</div><div class="link-b pressed" style="margin:22px -38px 0 11px"><svg width="14" height="23"><use href="#lk"/></svg></div><span class="lb b">Inside:</span><div class="stp"><svg><use href="#ud"/></svg></div><div class="box-in">0.5 in</div></div>
   <div class="ln"><span class="lb a">Bottom:</span><div class="stp"><svg><use href="#ud"/></svg></div><div class="box-in">0.5 in</div><span class="lb b">Outside:</span><div class="stp"><svg><use href="#ud"/></svg></div><div class="box-in">0.5 in</div></div>
  </div>
  <div class="grp g4"><div class="grp-t"><svg width="14" height="9" style="margin:7px 15px 0 3px"><path d="M0 0h14L7 9z" fill="#e2e2e2"/></svg>Bleed and Slug</div>
   <div class="heads"><span>Top</span><span>Bottom</span><span>Inside</span><span>Outside</span></div>
   <div class="ln" style="margin-top:10px"><span class="lb">Bleed:</span><div class="box-in w105">0 in</div><div class="box-in w105">0 in</div><div class="box-in w105">0 in</div><div class="box-in w105">0 in</div><div class="link-b pressed"><svg width="14" height="23"><use href="#lk"/></svg></div></div>
   <div class="ln"><span class="lb">Slug:</span><div class="box-in w105">0 in</div><div class="box-in w105">0 in</div><div class="box-in w105">0 in</div><div class="box-in w105">0 in</div><div class="link-b"><svg width="24" height="24"><path d="M8 9V6a4 4 0 0 1 8 0v3M8 15v3a4 4 0 0 0 8 0v-3M1 12h5M18 12h5M1 5l4 3M23 5l-4 3M1 19l4-3M23 19l-4-3" fill="none" stroke="#d8d8d8" stroke-width="1.900"/></svg></div></div>
  </div>
  <div class="d-flex" style="margin-top:16px;width:588px"><span class="cbx" style="margin-top:6px"></span><span style="line-height:33px;color:#dedede">Preview</span><div class="btn-x ok ms-auto">OK</div><div class="btn-x cancel">Cancel</div></div>
 </div>
 <div class="ime"><span>I</span><span>A</span><span>A1</span></div>
</div>

<script>
const NS='http://www.w3.org/2000/svg';
const add=(p,n,a,t)=>{const e=document.createElementNS(NS,n);for(const k in a)e.setAttribute(k,a[k]);if(t!==undefined)e.textContent=t;p.appendChild(e)};
const ticks=document.getElementById('ticks'),nums=document.getElementById('nums');
const STEP=73.25/8;
// horizontal ruler: eighths of an inch, numbered every two inches
for(let i=-9;i<163;i++){const x=Math.round(161+i*STEP)+.5;if(x<77||x>1644)continue;
 const m=i%16===0,h=m?23:i%4===0?8:i%2===0?5:3;add(ticks,'path',{d:`M${x} ${179-h}V179`});
 if(m)add(nums,'text',{x:x+2.5,y:169},4+i/8)}
// vertical ruler, digits stacked
for(let i=-5;i<84;i++){const y=Math.round(225+i*STEP)+.5;if(y<181||y>993)continue;
 const m=i%16===0,h=m?23:i%4===0?8:i%2===0?5:3;add(ticks,'path',{d:`M${75-h} ${y}H75`});
 if(m)String(2+i/8).split('').forEach((c,k)=>add(nums,'text',{x:55,y:y+13.5+k*12,fill:'#9c9c9c'},c))}
// paragraph alignment icons
document.querySelectorAll('.al').forEach(s=>{const a=s.dataset.a,W=s.dataset.bar?17:21;
 s.dataset.w.split(',').forEach((w,k)=>{const x=a==='l'?0:a==='c'?(W-w)/2:W-w;add(s,'path',{d:`M${x} ${k*2.7+.7}h${w}`,stroke:'#d8d8d8','stroke-width':1.3})});
 if(s.dataset.bar)add(s,'path',{d:'M20.5 0v21',stroke:'#d8d8d8'})});
</script>
</body>
</html>
